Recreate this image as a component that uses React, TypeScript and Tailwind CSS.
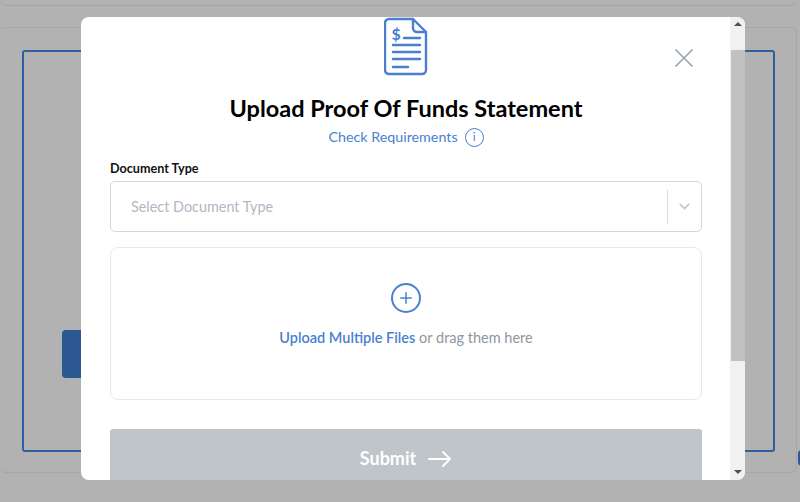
import React from 'react';
import { ChevronDown, Plus } from 'lucide-react';

const DocIcon = () => (
  <svg width="44" height="60" viewBox="0 0 44 60" fill="none" stroke="#4a7fd0" strokeWidth="2.400" strokeLinecap="round" strokeLinejoin="round">
    <path d="M5 2h24l13 13v38a4 4 0 0 1-4 4H5a4 4 0 0 1-4-4V6a4 4 0 0 1 4-4z" />
    <path d="M29 2v9a4 4 0 0 0 4 4h9" />
    <path d="M20 21h16M9 28h27M9 35h27M9 42h27M9 50h15" />
    <text x="7.500" y="23" fontFamily="Lato, sans-serif" fontSize="16" fontWeight="700" fill="#4a7fd0" stroke="none">$</text>
  </svg>
);

const Backdrop = () => (
  <div className="h-full w-full bg-[#b2b2b2] flex flex-col">
    <div className="h-[6px] shrink-0 border-b border-[#a6a6a6] rounded-b-[6px] mr-[3px]" />
    <div className="mt-[21px] h-[446px] mr-[3px] shrink-0 border border-t-[#a6a6a6] border-b-[#a6a6a6] border-r-[#a6a6a6] border-l-transparent rounded-[6px] pt-[22px] pl-[21px] pr-[21px]">
      <div className="h-[402px] border-2 border-[#2f5f9f] rounded-[3px] pt-[278px] pl-[38px]">
        <div className="w-[60px] h-[48px] bg-[#2b5793] rounded-[4px]" />
      </div>
    </div>
  </div>
);

const Scrollbar = () => (
  <div className="w-[15px] shrink-0 h-full bg-[#f1f1f1] flex flex-col items-end">
    <div className="h-[33px] shrink-0 w-full flex justify-center pt-[5px]">
      <div className="w-0 h-0 border-l-[4px] border-r-[4px] border-b-[4px] border-l-transparent border-r-transparent border-b-[#505050]" />
    </div>
    <div className="h-[311px] w-[14px] bg-[#c1c1c1] shrink-0" />
    <div className="flex-1" />
    <div className="pb-[6px] w-full flex justify-center">
      <div className="w-0 h-0 border-l-[4px] border-r-[4px] border-t-[4px] border-l-transparent border-r-transparent border-t-[#505050]" />
    </div>
  </div>
);

export default function App() {
  return (
    <div className="relative w-[800px] h-[502px] overflow-hidden font-['Lato',sans-serif]">
      <Backdrop />
      <div className="absolute left-[81px] top-[17px] w-[664px] h-[463px] bg-white rounded-[8px] overflow-hidden flex">
        <div className="relative flex-1 min-w-0 pl-[29px] pr-[28px]">
          <button className="absolute right-[36px] top-[31px] text-[#9aa2ad]">
            <svg width="20" height="20" viewBox="0 0 20 20" fill="none" stroke="currentColor" strokeWidth="1.600">
              <path d="M1.500 1.500l17 17M18.500 1.500l-17 17" />
            </svg>
          </button>
          <div className="flex justify-center h-[58px]">
            <DocIcon />
          </div>
          <h2 className="mt-[18px] text-center text-[23.500px] leading-[30px] font-bold text-black">Upload Proof Of Funds Statement</h2>
          <div className="mt-[2px] flex items-center justify-center gap-[7px] text-[14.300px] leading-[24px] text-[#4a7fd0]">
            <span>Check Requirements</span>
            <span className="w-[19px] h-[19px] rounded-full border-[1.500px] border-[#4a7fd0] flex items-center justify-center text-[12px] leading-none">i</span>
          </div>
          <label className="block mt-[10px] text-[12.600px] leading-[20px] font-bold text-[#111]">Document Type</label>
          <div className="mt-[2px] h-[51px] border border-[#d5d7de] rounded-[5px] flex items-center">
            <span className="flex-1 pl-[20px] text-[14.400px] text-[#b0b8c4]">Select Document Type</span>
            <span className="w-px h-[34px] bg-[#d9d9d9]" />
            <span className="w-[33px] flex justify-center text-[#c9c9c9]"><ChevronDown size={17} strokeWidth={2.500} /></span>
          </div>
          <div className="mt-[15px] h-[153px] border border-[#e6e8ee] rounded-[8px] flex flex-col items-center pt-[35px]">
            <span className="w-[30px] h-[30px] rounded-full border-2 border-[#4a7fd0] flex items-center justify-center text-[#4a7fd0]">
              <Plus size={18} strokeWidth={2} />
            </span>
            <p className="mt-[14px] text-[14.500px] leading-[22px] text-[#8f96a0]">
              <span className="font-semibold text-[#4a7fd0]">Upload Multiple Files</span> or drag them here
            </p>
          </div>
          <button className="mt-[29px] w-full h-[60px] bg-[#c0c5c9] rounded-[3px] flex items-center justify-center gap-[12px] pb-[1px] text-white text-[18px] font-bold">
            Submit
            <svg width="24" height="18" viewBox="0 0 24 18" fill="none" stroke="currentColor" strokeWidth="2" strokeLinecap="round" strokeLinejoin="round">
              <path d="M1 9h21M15 2l7 7-7 7" />
            </svg>
          </button>
        </div>
        <Scrollbar />
      </div>
      <div className="absolute right-[-8px] top-[450px] w-[10px] h-[16px] rounded-[4px] bg-[#2b5793]" />
    </div>
  );
}
